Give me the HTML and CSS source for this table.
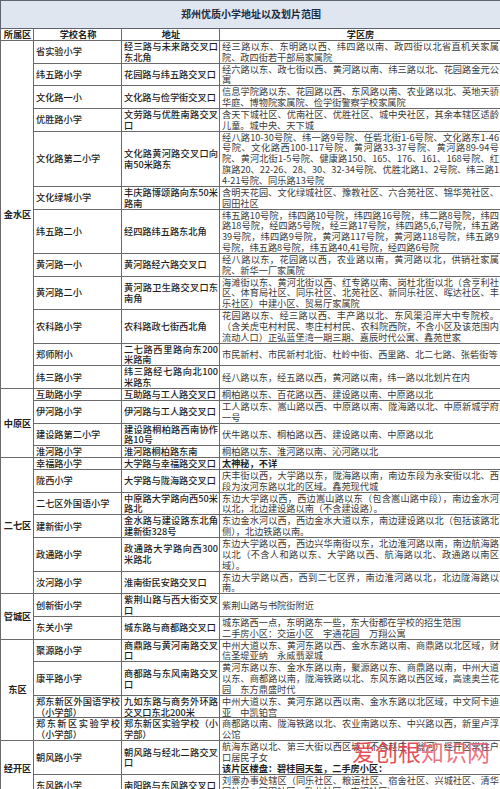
FILE: index.html
```html
<!DOCTYPE html>
<html lang="zh">
<head>
<meta charset="utf-8">
<link rel="stylesheet" href="styles.css">
</head>
<body>
<div class="page">
<table class="tbl">
<colgroup><col class="c1"><col class="c2"><col class="c3"><col class="c4"></colgroup>
<tr class="title-row"><td colspan="4" class="title">郑州优质小学地址以及划片范围</td></tr>
<tr class="head"><th>所属区</th><th>学校名称</th><th>地址</th><th>学区房</th></tr>

<tr><td class="dist" rowspan="12">金水区</td><td class="name">省实验小学</td><td class="addr">经三路与未来路交叉口东北角</td><td class="area">经三路以东、东明路以西、纬四路以南、政四街以北省直机关家属院、政四街若干部局家属院</td></tr>
<tr><td class="name">纬五路小学</td><td class="addr">花园路与纬五路交叉口</td><td class="area">经六路以东、政七街以西、黄河路以南、纬三路以北、花园路金元公寓</td></tr>
<tr><td class="name">文化路一小</td><td class="addr">文化路与俭学街交叉口</td><td class="area">信息学院路以东、花园路以西、东风路以南、农业路以北、英地天骄华庭、博物院家属院、俭学街警察学校家属院</td></tr>
<tr><td class="name">优胜路小学</td><td class="addr">文劳路与优胜南路交叉口</td><td class="area">含天下城社区、优南社区、优胜社区、城中央社区，其余本辖区适龄儿童。城中央、天下城</td></tr>
<tr><td class="name">文化路第二小学</td><td class="addr">文化路黄河路交叉口向南50米路东</td><td class="area">经八路10-30号院、纬一路9号院、任砦北街1-6号院、文化路东1-46号院、文化路西100-117号院、黄河路33-37号院、黄河路89-94号院、黄河北街1-5号院、健康路150、165、176、161、168号院、红旗路20、22-26、28、30、32-34号院、优胜北路1、2号院、纬三路14-21号院、同乐路13号院</td></tr>
<tr><td class="name">文化绿城小学</td><td class="addr">丰庆路博颂路向东50米路南</td><td class="area">含明天花园、文化绿城社区、豫教社区、六合苑社区、锦华苑社区、园田社区</td></tr>
<tr><td class="name">纬五路二小</td><td class="addr">经四路纬五路东北角</td><td class="area">纬五路10号院，纬四路10号院，纬四路16号院，纬二路8号院，纬四路18号院，经四路5号院，经三路17号院，纬四路5,6,7号院，纬五路39号院，纬四路9号院，黄河路117号院，黄河路118号院，纬五路9号院，纬五路8号院，纬五路40,41号院，经四路6号院</td></tr>
<tr><td class="name">黄河路一小</td><td class="addr">黄河路经六路交叉口</td><td class="area">经八路以东，花园路以西，农业路以南，黄河路以北，供销社家属院、新华一厂家属院</td></tr>
<tr><td class="name">黄河路二小</td><td class="addr">黄河路卫生路交叉口东南角</td><td class="area">海滩街以东、黄河北街以西、红专路以南、岗杜北街以北（含亨利社区、体育局社区、同乐社区、北苑社区、新同乐社区、晖达社区、丰乐社区）中建小区、贸易厅家属院</td></tr>
<tr><td class="name">农科路小学</td><td class="addr">农科路政七街西北角</td><td class="area">花园路以东、经三路以西、丰产路以北、东风渠沿岸大中专院校。（含关虎屯村村民、枣庄村村民、农科院西院，不含小区及该范围内流动人口）正弘蓝堡湾一期三期、嘉辰时代公寓、鑫苑世家</td></tr>
<tr><td class="name">郑师附小</td><td class="addr">二七路西里路向东200米路南</td><td class="area">市民新村、市民新村北街、杜岭中街、西里路、北二七路、张砦街等</td></tr>
<tr><td class="name">纬三路小学</td><td class="addr">纬三路经七路向北100米路东</td><td class="area">经八路以东，经五路以西，黄河路以南，纬一路以北划片在内</td></tr>

<tr><td class="dist" rowspan="4">中原区</td><td class="name">互助路小学</td><td class="addr">互助路与工人路交叉口</td><td class="area">桐柏路以东、百花路以西、建设路以南、中原路以北</td></tr>
<tr><td class="name">伊河路小学</td><td class="addr">伊河路与工人路交叉口</td><td class="area">工人路以东、嵩山路以西、中原路以南、陇海路以北、中原新城学府一号</td></tr>
<tr><td class="name">建设路第二小学</td><td class="addr">建设路桐柏路西南协作路10号</td><td class="area">伏牛路以东、桐柏路以西、建设路以南、中原路以北</td></tr>
<tr><td class="name">淮河路小学</td><td class="addr">淮河路桐柏路东南</td><td class="area">桐柏路以东、淮河路以南、沁河路以北</td></tr>

<tr><td class="dist" rowspan="6">二七区</td><td class="name">幸福路小学</td><td class="addr">大学路与幸福路交叉口</td><td class="area strong">太神秘，不详</td></tr>
<tr><td class="name">陇西小学</td><td class="addr">大学路与陇海路交叉口</td><td class="area">庆丰街以西，大学路以东，陇海路以南，南边东段为永安街以北、西段为汝河东路以北的区域。鑫苑现代城</td></tr>
<tr><td class="name">二七区外国语小学</td><td class="addr">中原路大学路向西50米路北</td><td class="area">东边大学路以西，西边嵩山路以东（包含嵩山路中段），南边金水河以北，北边建设路以南（不含建设路）。</td></tr>
<tr><td class="name">建新街小学</td><td class="addr">金水路与建设路东北角建新街328号</td><td class="area">东边金水河以西，西边金水大道以东，南边建设路以北（包括该路北侧），北边铁路以南。</td></tr>
<tr><td class="name">政通路小学</td><td class="addr">政通路大学路向西300米路北</td><td class="area">东边大学路以西，西边兴华南街以东，北边淮河路以南，南边航海路以北（不含人和路以东、大学路以西、航海路以北、政通路以南区域）。</td></tr>
<tr><td class="name">汝河路小学</td><td class="addr">淮南街民安路交叉口</td><td class="area">东边大学路以西，西到二七区界，南边淮河路以北，北边陇海路以南。</td></tr>

<tr><td class="dist" rowspan="2">管城区</td><td class="name">创新街小学</td><td class="addr">紫荆山路与西大街交叉口</td><td class="area">紫荆山路与书院街附近</td></tr>
<tr><td class="name">东关小学</td><td class="addr">城东路与商都路交叉口</td><td class="area">城东路西一点，东明路东一些，东大街都在学校的招生范围<br>二手房小区：交运小区　宇通花园　万翔公寓</td></tr>

<tr><td class="dist" rowspan="4">东区</td><td class="name">聚源路小学</td><td class="addr">商鼎路与黄河南路交叉口</td><td class="area">中州大道以东、黄河东路以西、金水东路以南、商鼎路以北区域，财信圣堤亚纳　永威翡翠城</td></tr>
<tr><td class="name">康平路小学</td><td class="addr">商都路与东风南路交叉口</td><td class="area">黄河东路以东、金水东路以南，聚源路以东、商鼎路以南，中州大道以东、商都路以南，陇海铁路以北、东风东路以西区域，高速奥兰花园　东方鼎盛时代</td></tr>
<tr><td class="name">郑东新区外国语学校（小学部）</td><td class="addr">九如东路与商务外环路交叉口东北200米</td><td class="area">中州大道以东、黄河东路以西以南、金水东路以北区域，中文阿卡迪亚　中凯铂宫</td></tr>
<tr><td class="name">郑东新区实验学校（小学部）</td><td class="addr">郑东新区实验学校（小学部）</td><td class="area">商都路以南、陇海铁路以北、农业南路以东、中兴路以西，新里卢浮公馆</td></tr>

<tr><td class="dist" rowspan="2">经开区</td><td class="name">朝风路小学</td><td class="addr">朝风路与经北二路交叉口</td><td class="area">航海东路以北、第三大街以西区域（不含赵庄、瓮河）经开区常住户口居民子女<br><b>该片区楼盘：碧桂园天玺，二手房小区：</b></td></tr>
<tr><td class="name">东风路小学</td><td class="addr">南阳路与东风路交叉口</td><td class="area">刘寨办事处辖区（同乐社区、粮运社区、宿舍社区、兴城社区、清华园社区、园田社区、卧龙社区、南阳社区）</td></tr>
</table>
<div class="watermark"><span class="wm-a">爱创根</span><span class="wm-b">知识网</span></div>
</div>
</body>
</html>
```

FILE: styles.css
```css
html, body {
  margin: 0;
  padding: 0;
  background: #ffffff;
}
.page {
  position: relative;
  width: 500px;
  height: 789px;
  overflow: hidden;
}
.tbl {
  width: 500px;
  border-collapse: collapse;
  table-layout: fixed;
  font-family: "Noto Sans CJK SC", "Noto Sans", sans-serif;
  font-size: 9.2px;
  line-height: 10.85px;
  color: #2a2a2a;
}
.c1 { width: 33px; }
.c2 { width: 88px; }
.c3 { width: 98px; }
.c4 { width: 281px; }
.tbl td, .tbl th {
  border: 1px solid #6a6a6a;
  padding: 0 1px 0 2px;
  vertical-align: middle;
  text-align: justify;
  word-break: break-all;
}
.title-row .title {
  height: 27px;
  background: #dfe6ef;
  text-align: center;
  font-weight: 700;
  font-size: 10px;
  color: #1f2a3a;
  border: 1px solid #5d6470;
}
.head th {
  font-weight: 700;
  text-align: center;
  color: #222;
  background: #fff;
}
.dist {
  text-align: center !important;
  font-weight: 700;
  color: #222;
}
.name, .addr {
  font-weight: 500;
  color: #1e1e1e;
}
.area {
  color: #3a3a3a;
}
.area b, .strong {
  font-weight: 700;
  color: #1e1e1e;
}
.watermark {
  position: absolute;
  left: 352px;
  top: 736px;
  font-family: "Noto Sans CJK SC", sans-serif;
  font-size: 23px;
  line-height: 30px;
  letter-spacing: 0px;
  white-space: nowrap;
}
.wm-a { color: rgba(226, 62, 72, 0.92); }
.wm-b { color: rgba(232, 90, 110, 0.85); }
```
